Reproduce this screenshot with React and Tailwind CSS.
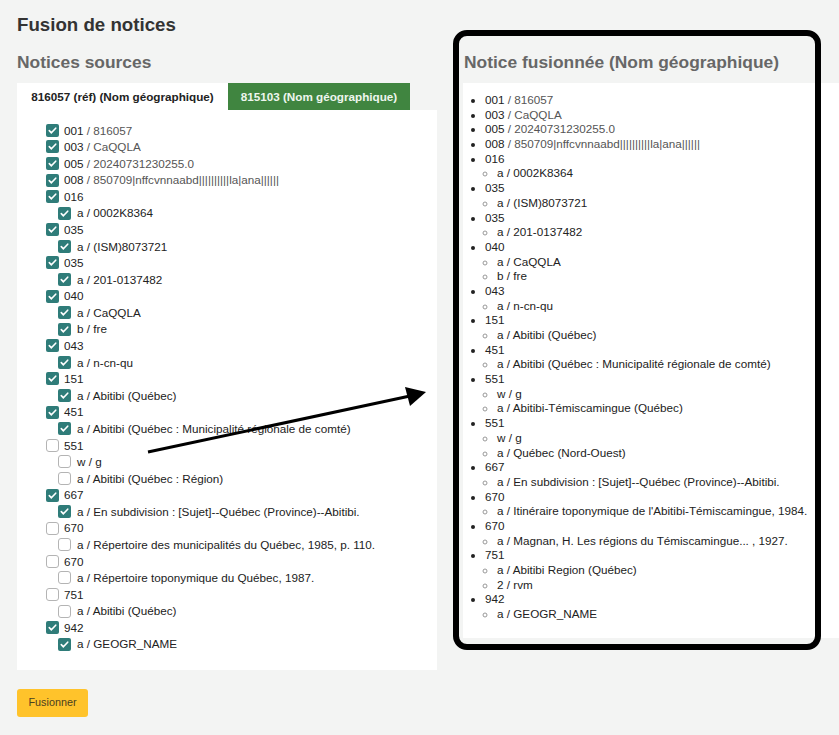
import React from 'react';

const SOURCE = [
  { tag: '001', val: '816057', on: true },
  { tag: '003', val: 'CaQQLA', on: true },
  { tag: '005', val: '20240731230255.0', on: true },
  { tag: '008', val: '850709|nffcvnnaabd||||||||||la|ana||||||', on: true },
  { tag: '016', on: true, subs: [['a', '0002K8364', true]] },
  { tag: '035', on: true, subs: [['a', '(ISM)8073721', true]] },
  { tag: '035', on: true, subs: [['a', '201-0137482', true]] },
  { tag: '040', on: true, subs: [['a', 'CaQQLA', true], ['b', 'fre', true]] },
  { tag: '043', on: true, subs: [['a', 'n-cn-qu', true]] },
  { tag: '151', on: true, subs: [['a', 'Abitibi (Québec)', true]] },
  { tag: '451', on: true, subs: [['a', 'Abitibi (Québec : Municipalité régionale de comté)', true]] },
  { tag: '551', on: false, subs: [['w', 'g', false], ['a', 'Abitibi (Québec : Région)', false]] },
  { tag: '667', on: true, subs: [['a', 'En subdivision : [Sujet]--Québec (Province)--Abitibi.', true]] },
  { tag: '670', on: false, subs: [['a', 'Répertoire des municipalités du Québec, 1985, p. 110.', false]] },
  { tag: '670', on: false, subs: [['a', 'Répertoire toponymique du Québec, 1987.', false]] },
  { tag: '751', on: false, subs: [['a', 'Abitibi (Québec)', false]] },
  { tag: '942', on: true, subs: [['a', 'GEOGR_NAME', true]] },
];

const MERGED = [
  { tag: '001', val: '816057' },
  { tag: '003', val: 'CaQQLA' },
  { tag: '005', val: '20240731230255.0' },
  { tag: '008', val: '850709|nffcvnnaabd||||||||||la|ana||||||' },
  { tag: '016', subs: [['a', '0002K8364']] },
  { tag: '035', subs: [['a', '(ISM)8073721']] },
  { tag: '035', subs: [['a', '201-0137482']] },
  { tag: '040', subs: [['a', 'CaQQLA'], ['b', 'fre']] },
  { tag: '043', subs: [['a', 'n-cn-qu']] },
  { tag: '151', subs: [['a', 'Abitibi (Québec)']] },
  { tag: '451', subs: [['a', 'Abitibi (Québec : Municipalité régionale de comté)']] },
  { tag: '551', subs: [['w', 'g'], ['a', 'Abitibi-Témiscamingue (Québec)']] },
  { tag: '551', subs: [['w', 'g'], ['a', 'Québec (Nord-Ouest)']] },
  { tag: '667', subs: [['a', 'En subdivision : [Sujet]--Québec (Province)--Abitibi.']] },
  { tag: '670', subs: [['a', "Itinéraire toponymique de l'Abitibi-Témiscamingue, 1984."]] },
  { tag: '670', subs: [['a', 'Magnan, H. Les régions du Témiscamingue... , 1927.']] },
  { tag: '751', subs: [['a', 'Abitibi Region (Québec)'], ['2', 'rvm']] },
  { tag: '942', subs: [['a', 'GEOGR_NAME']] },
];

function Box({ on }) {
  if (!on) {
    return <span className="inline-block h-[13px] w-[13px] shrink-0 rounded-[3px] border border-[#b4b4b4] bg-white" />;
  }
  return (
    <span className="flex h-[13px] w-[13px] shrink-0 items-center justify-center rounded-[2px] bg-[#2f7c79]">
      <svg viewBox="0 0 12 12" className="h-[11px] w-[11px]">
        <path d="M2.5 6.2l2.3 2.3 4.7-5" fill="none" stroke="white" strokeWidth="1.8" strokeLinecap="round" strokeLinejoin="round" />
      </svg>
    </span>
  );
}

function Row({ on, indent, children }) {
  return (
    <div className={`flex h-[16.58px] items-center ${indent ? 'pl-[41px]' : 'pl-[29px]'}`}>
      <Box on={on} />
      <span className={indent ? 'ml-[6px]' : 'ml-[5px]'}>{children}</span>
    </div>
  );
}

export default function App() {
  return (
    <div
      className="relative min-h-screen overflow-hidden bg-[#f3f4f3] pl-[17px] text-[11.7px] text-[#222]"
      style={{ fontFamily: '"Liberation Sans", Arial, sans-serif' }}
    >
      <h1 className="pt-[11px] text-[18.7px] font-bold leading-[28px] text-[#333]">Fusion de notices</h1>

      <div className="mt-[9px] flex">
        {/* Sources */}
        <div className="w-[420px] shrink-0">
          <h2 className="text-[17.4px] font-bold leading-[28px] text-[#676767]">Notices sources</h2>
          <div className="mt-[7px] flex h-[27px] text-[11.7px] font-bold">
            <div className="flex w-[211px] items-center justify-center bg-white text-[#222]">
              816057 (réf) (Nom géographique)
            </div>
            <div className="flex w-[182px] items-center justify-center bg-[#408540] text-[#eef6ee]">
              815103 (Nom géographique)
            </div>
          </div>
          <div className="bg-white pb-[17px] pt-[12px]">
            {SOURCE.map((f, i) => (
              <div key={i}>
                <Row on={f.on}>
                  {f.tag}
                  {f.val && <span className="text-[#555]"> / {f.val}</span>}
                </Row>
                {f.subs &&
                  f.subs.map(([c, v, on], j) => (
                    <Row key={j} on={on} indent>
                      {c} / {v}
                    </Row>
                  ))}
              </div>
            ))}
          </div>
          <button className="mt-[19px] h-[28px] w-[71px] rounded-[3px] bg-[#ffc32b] text-[10.8px] text-[#4a4020]">
            Fusionner
          </button>
        </div>

        {/* Merged */}
        <div className="ml-[26px] flex-1">
          <h2 className="pl-px text-[17.4px] font-bold leading-[28px] text-[#676767]">
            Notice fusionnée (Nom géographique)
          </h2>
          <div className="mt-[7px] w-[420px] bg-white pb-[16px] pt-[10px]">
            <ul className="list-disc pl-[22px] leading-[14.69px]">
              {MERGED.map((f, i) => (
                <li key={i}>
                  {f.tag}
                  {f.val && <span className="text-[#555]"> / {f.val}</span>}
                  {f.subs && (
                    <ul className="list-[circle] pl-[12px]">
                      {f.subs.map(([c, v], j) => (
                        <li key={j} className="marker:text-[#999]">
                          {c} / {v}
                        </li>
                      ))}
                    </ul>
                  )}
                </li>
              ))}
            </ul>
          </div>
        </div>
      </div>

      {/* Annotation frame */}
      <div className="pointer-events-none absolute left-[453px] top-[30px] h-[620px] w-[368px] rounded-[14px] border-[6px] border-black" />

      {/* Annotation arrow */}
      <svg className="pointer-events-none absolute left-0 top-0" width="839" height="735">
        <line x1="148" y1="452" x2="410" y2="396" stroke="black" strokeWidth="3" />
        <polygon points="426,392 405,387 410,406" fill="black" />
      </svg>
    </div>
  );
}
